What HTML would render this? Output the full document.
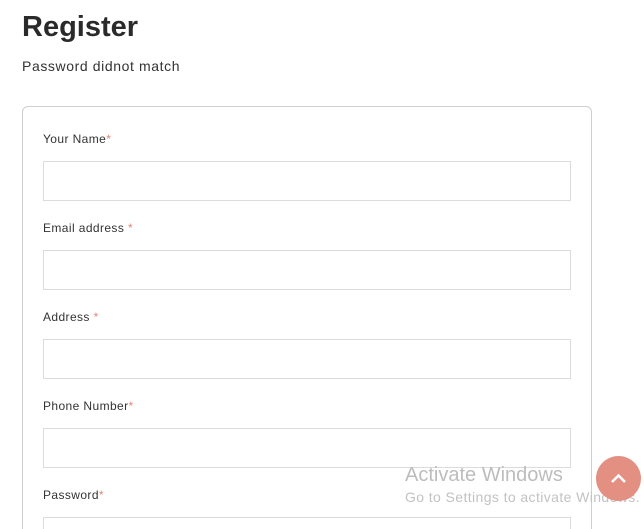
<!DOCTYPE html>
<html><head><meta charset="utf-8"><style>
html,body{margin:0;padding:0;background:#fff;width:644px;height:529px;overflow:hidden;font-family:"Liberation Sans",sans-serif;color:#222}
.wrap{position:relative;width:644px;height:529px;overflow:hidden}
h1{position:absolute;left:22px;top:11px;margin:0;font-size:29px;font-weight:bold;color:#2a2a2a}
.sub{position:absolute;left:22px;top:58px;font-size:14px;color:#333;letter-spacing:0.6px}
.card{position:absolute;left:22px;top:106px;width:568px;height:422px;border:1px solid #cfcfcf;border-bottom:none;border-radius:6px 6px 0 0}
.lbl{position:absolute;left:43px;font-size:12px;color:#333;letter-spacing:0.4px}
.lbl span{color:#e0857a}
.inp{position:absolute;left:43px;width:526px;height:38px;border:1px solid #dcdcdc}
.wm1{position:absolute;left:405px;top:464px;font-size:20px;color:#bdbdbd}
.wm2{position:absolute;left:405px;top:489px;font-size:14px;color:#c2c2c2;letter-spacing:0.4px;white-space:nowrap}
.top{position:absolute;left:596px;top:456px;width:45px;height:45px;border-radius:50%;background:#e39082}
</style></head><body><div class="wrap">
<h1>Register</h1>
<div class="sub">Password didnot match</div>
<div class="card"></div>
<div class="lbl" style="top:132px">Your Name<span>*</span></div>
<div class="inp" style="top:161px"></div>
<div class="lbl" style="top:221px">Email address <span>*</span></div>
<div class="inp" style="top:250px"></div>
<div class="lbl" style="top:310px">Address <span>*</span></div>
<div class="inp" style="top:339px"></div>
<div class="lbl" style="top:399px">Phone Number<span>*</span></div>
<div class="inp" style="top:428px"></div>
<div class="lbl" style="top:488px">Password<span>*</span></div>
<div class="inp" style="top:517px;height:11px;border-bottom:none"></div>
<div class="wm1">Activate Windows</div>
<div class="wm2">Go to Settings to activate Windows.</div>
<div class="top"><svg width="45" height="45" viewBox="0 0 45 45"><path d="M16 26 L22.5 19.5 L29 26" fill="none" stroke="#fff" stroke-width="2.5"/></svg></div>
</div></body></html>
